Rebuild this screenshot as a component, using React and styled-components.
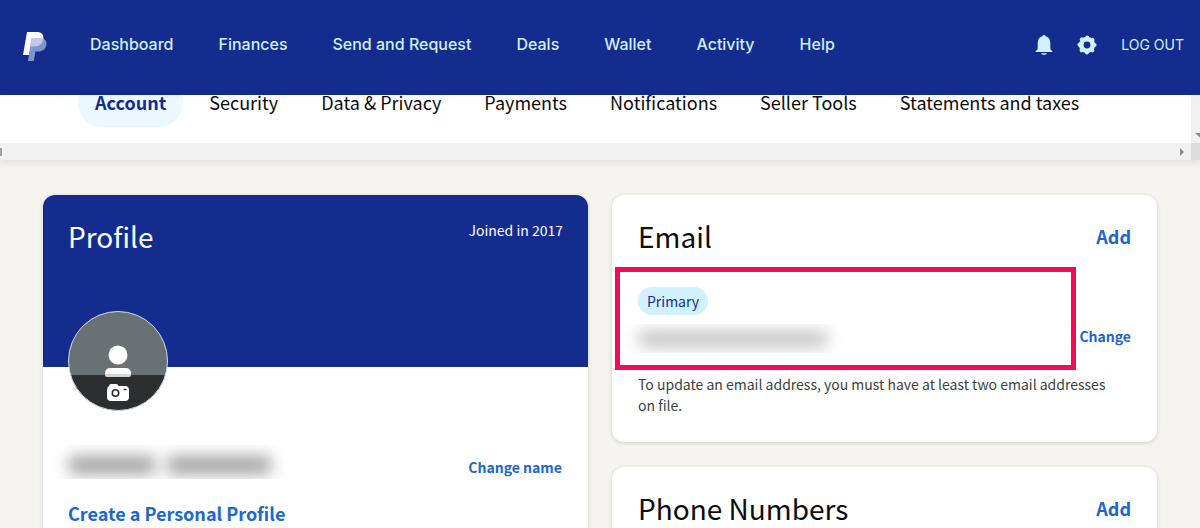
import React from "react";
import styled, { createGlobalStyle } from "styled-components";

const GlobalStyle = createGlobalStyle`
  * {
    box-sizing: border-box;
  }
  body {
    margin: 0;
    background: #f5f4ef;
    color: #0c0c0d;
    font-family: "Noto Sans CJK SC", "Noto Sans", sans-serif;
  }
  h2, p {
    margin: 0;
  }
  a {
    text-decoration: none;
  }
`;

const Page = styled.div`
  height: 100vh;
  overflow: hidden;
`;

const Header = styled.header`
  display: flex;
  align-items: center;
  height: 95px;
  padding: 0 16px 4px 22px;
  background: #142c8e;
  font-family: Inter, sans-serif;
`;
const LogoLink = styled.a`
  display: flex;
  margin-right: 42px;
  padding-top: 2px;
`;
const MainNav = styled.nav`
  display: flex;
  flex: 1;
  gap: 45px;
  padding-bottom: 4px;
`;
const NavLink = styled.a`
  color: #d2efff;
  font-size: 16px;
  font-weight: 500;
  line-height: 24px;
`;
const Actions = styled.div`
  display: flex;
  align-items: center;
  gap: 24px;
  padding-bottom: 2px;
`;
const IconButton = styled.button`
  display: flex;
  padding: 0;
  border: 0;
  background: none;
  color: #d2f1ff;
`;
const LogOut = styled.a`
  color: #d2efff;
  font-size: 14px;
  line-height: 24px;
`;

const TabFrame = styled.div`
  display: grid;
  grid-template-columns: 1fr 9px;
  grid-template-rows: 48px 17px;
  box-shadow: 0 2px 8px rgba(0, 0, 0, 0.1);
`;
const Tabs = styled.nav`
  display: flex;
  align-items: flex-end;
  gap: 9px;
  padding: 0 0 16px 78px;
  background: #fff;
  overflow: hidden;
`;
const Tab = styled.a`
  flex: none;
  padding: 11px 17px 13px;
  border-radius: 24px;
  background: ${(props) => (props.$active ? "#ebf8ff" : "transparent")};
  color: ${(props) => (props.$active ? "#142c8e" : "#0c0c0d")};
  font-size: 18px;
  font-weight: ${(props) => (props.$active ? 700 : 400)};
  line-height: 24px;
`;
const Track = styled.div`
  display: flex;
  align-items: ${(props) => (props.$vertical ? "flex-end" : "center")};
  justify-content: ${(props) => (props.$vertical ? "flex-end" : "space-between")};
  padding: ${(props) => (props.$vertical ? "0 0 5px" : "0 7px 0 0")};
  background: #f0f0f0;
`;
const Corner = styled.div`
  background: #dcdcdc;
`;

const Main = styled.main`
  display: grid;
  grid-template-columns: 1fr 1fr;
  gap: 24px;
  padding: 35px 43px 0;
`;
const Column = styled.div`
  display: flex;
  flex-direction: column;
  gap: 25px;
`;
const Card = styled.section`
  position: relative;
  border-radius: 12px;
  background: #fff;
  box-shadow: 0 1px 4px rgba(0, 0, 0, 0.16);
`;
const ProfileTop = styled.div`
  display: flex;
  justify-content: space-between;
  height: 172px;
  padding: 23px 25px;
  border-radius: 12px 12px 0 0;
  background: #142c8e;
  color: #fff;
`;
const Title = styled.h2`
  font-size: 28px;
  font-weight: 400;
  line-height: 36px;
`;
const Joined = styled.p`
  font-size: 14px;
  line-height: 24px;
`;
const Avatar = styled.button`
  display: block;
  width: 100px;
  height: 100px;
  margin: -56px 0 0 25px;
  padding: 0;
  border: 0;
  background: none;
`;
const ProfileBody = styled.div`
  padding-bottom: 40px;
`;
const NameRow = styled.div`
  display: flex;
  align-items: flex-end;
  justify-content: space-between;
  padding: 34px 26px 0 25px;
`;
const Redacted = styled.div`
  display: flex;
  align-items: center;
  gap: 10px;
  height: ${(props) => props.$height}px;
  margin-left: -20px;
  padding: ${(props) => props.$top}px 20px 0;
  overflow: hidden;
`;
const Smudge = styled.span`
  width: ${(props) => props.$width}px;
  height: 18px;
  border-radius: 8px;
  background: ${(props) => props.$color};
  filter: blur(8px);
`;
const TextLink = styled.a`
  color: #1b66cf;
  font-size: ${(props) => (props.$large ? 18 : 14)}px;
  font-weight: 700;
  line-height: 24px;
`;
const CreateLink = styled(TextLink)`
  display: block;
  margin: 22px 25px 0;
`;

const CardBody = styled(Card)`
  padding: 23px 26px 26px;
`;
const CardHead = styled.div`
  display: flex;
  align-items: center;
  justify-content: space-between;
`;
const Badge = styled.span`
  display: inline-block;
  margin-top: 33px;
  padding: 2px 9px;
  border-radius: 14px;
  background: #d2f1ff;
  color: #142c8e;
  font-size: 14px;
  line-height: 24px;
`;
const EmailRow = styled.div`
  display: flex;
  align-items: flex-start;
  justify-content: space-between;
  margin-top: 9px;
`;
const Note = styled.p`
  margin-top: 21px;
  padding-right: 16px;
  color: #3c3f42;
  font-size: 14px;
  line-height: 21px;
`;
const Highlight = styled.div`
  position: absolute;
  top: 72px;
  right: 81px;
  left: 3px;
  height: 103px;
  border: 5px solid #f70a54;
`;

const Logo = () => (
  <svg width="26" height="32" viewBox="0 0 26 32" aria-hidden="true">
    <path d="M5 1h9.500c5 0 7.500 2.500 6.800 7-.8 5-4 7.500-9 7.500H8.600L7.200 24H1z" fill="#fff" />
    <path
      d="M9.500 7H20c3.600 1 4.900 3.500 4.300 7-.8 4.400-4 6.500-8.300 6.500h-2.600l-1.600 9.500H6z"
      fill="#8192cc"
    />
    <path d="M9.500 7h11.900c-.4 5.500-3.800 8.500-9.100 8.500H8.100z" fill="#c2cae6" />
  </svg>
);

const Bell = () => (
  <svg width="18" height="22" viewBox="0 0 18 22" fill="currentColor" aria-hidden="true">
    <path d="M9 1c.8 0 1.300.4 1.800 1.200 3 1.100 4.500 3.600 4.500 6.800v6l2 2.200c.3.400.1.800-.4.800H1.100c-.5 0-.7-.4-.4-.8l2-2.200V9c0-3.200 1.500-5.700 4.500-6.800C7.700 1.400 8.200 1 9 1z" />
    <path d="M6 19.300h6c-.6 1-1.600 1.500-3 1.500s-2.400-.5-3-1.500z" />
  </svg>
);

const Gear = () => (
  <svg width="20" height="20" viewBox="0 0 20 20" fill="none" stroke="currentColor" aria-hidden="true">
    <circle cx="10" cy="10" r="5.800" strokeWidth="4.800" />
    <circle
      cx="10"
      cy="10"
      r="7.600"
      strokeWidth="4"
      strokeLinecap="round"
      strokeDasharray=".01 5.959"
    />
  </svg>
);

const AvatarPicture = () => (
  <svg width="100" height="100" viewBox="0 0 100 100" aria-hidden="true">
    <clipPath id="avatar-clip">
      <circle cx="50" cy="50" r="49.500" />
    </clipPath>
    <g clipPath="url(#avatar-clip)">
      <path d="M0 0h100v100H0z" fill="#687173" />
      <circle cx="50" cy="44" r="9.500" fill="#fff" />
      <rect x="37" y="57" width="26" height="12" rx="5" fill="#fff" />
      <path d="M0 64h100v36H0z" fill="#2c2e2f" />
      <path d="M37 63h26v1q0 2-3 2H40q-3 0-3-2z" fill="#d5d6d6" />
    </g>
    <path
      d="M43 73h5q2 0 2.500 2H57q4 0 4 4v7q0 4-4 4H43q-4 0-4-4v-7q0-3 2-4 .5-2 2-2z"
      fill="#fff"
    />
    <circle cx="47.500" cy="82" r="3.200" fill="none" stroke="#2c2e2f" strokeWidth="1.600" />
    <path d="M55.500 78.500h3" stroke="#2c2e2f" strokeWidth="1.400" />
    <circle cx="50" cy="50" r="49.500" fill="none" stroke="#d4d9ee" />
  </svg>
);

const navItems = ["Dashboard", "Finances", "Send and Request", "Deals", "Wallet", "Activity", "Help"];
const tabItems = [
  "Account",
  "Security",
  "Data & Privacy",
  "Payments",
  "Notifications",
  "Seller Tools",
  "Statements and taxes",
];

const App = () => {
  return (
    <Page>
      <GlobalStyle />
      <Header>
        <LogoLink href="#" aria-label="PayPal">
          <Logo />
        </LogoLink>
        <MainNav>
          {navItems.map((item) => (
            <NavLink href="#" key={item}>
              {item}
            </NavLink>
          ))}
        </MainNav>
        <Actions>
          <IconButton aria-label="Notifications">
            <Bell />
          </IconButton>
          <IconButton aria-label="Settings">
            <Gear />
          </IconButton>
          <LogOut href="#">LOG OUT</LogOut>
        </Actions>
      </Header>
      <TabFrame>
        <Tabs>
          {tabItems.map((item, index) => (
            <Tab href="#" key={item} $active={index === 0}>
              {item}
            </Tab>
          ))}
        </Tabs>
        <Track $vertical>
          <svg width="5" height="5" viewBox="0 0 5 5" aria-hidden="true">
            <path d="M0 0h5v4.500z" fill="#8b8b8b" />
          </svg>
        </Track>
        <Track>
          <svg width="2" height="8" viewBox="0 0 2 8" aria-hidden="true">
            <path d="M0 0h2v8H0z" fill="#a0a0a0" />
          </svg>
          <svg width="4" height="8" viewBox="0 0 4 8" aria-hidden="true">
            <path d="M0 0l4 4-4 4z" fill="#8b8b8b" />
          </svg>
        </Track>
        <Corner />
      </TabFrame>
      <Main>
        <Column>
          <Card>
            <ProfileTop>
              <Title>Profile</Title>
              <Joined>Joined in 2017</Joined>
            </ProfileTop>
            <ProfileBody>
              <Avatar aria-label="Change photo">
                <AvatarPicture />
              </Avatar>
              <NameRow>
                <Redacted $height={34} $top={6}>
                  <Smudge $width={88} $color="#a0a0a0" />
                  <Smudge $width={106} $color="#a0a0a0" />
                </Redacted>
                <TextLink href="#">Change name</TextLink>
              </NameRow>
              <CreateLink href="#" $large>
                Create a Personal Profile
              </CreateLink>
            </ProfileBody>
          </Card>
        </Column>
        <Column>
          <CardBody>
            <CardHead>
              <Title>Email</Title>
              <TextLink href="#" $large>
                Add
              </TextLink>
            </CardHead>
            <Badge>Primary</Badge>
            <EmailRow>
              <Redacted $height={29} $top={0}>
                <Smudge $width={190} $color="#c8c7c8" />
              </Redacted>
              <TextLink href="#">Change</TextLink>
            </EmailRow>
            <Note>
              To update an email address, you must have at least two email addresses on file.
            </Note>
            <Highlight />
          </CardBody>
          <CardBody>
            <CardHead>
              <Title>Phone Numbers</Title>
              <TextLink href="#" $large>
                Add
              </TextLink>
            </CardHead>
          </CardBody>
        </Column>
      </Main>
    </Page>
  );
};

export default App;
